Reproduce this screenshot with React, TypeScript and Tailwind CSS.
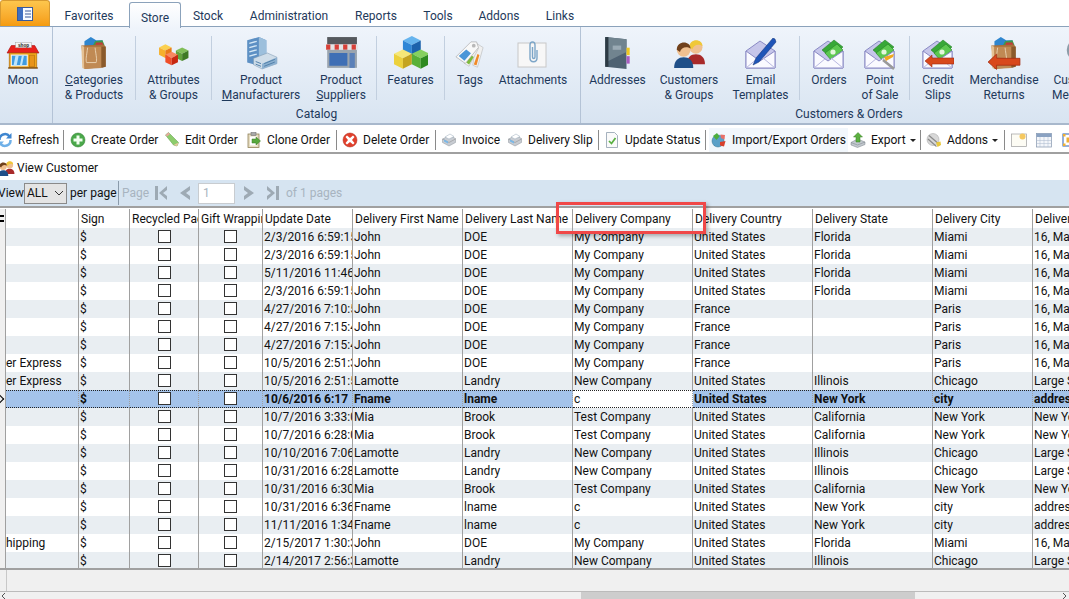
import type { ReactNode } from "react";

const I = ({ s = 32, children }: { s?: number; children: ReactNode }) => (
  <svg width={s} height={s} viewBox="0 0 32 32" className="shrink-0">
    {children}
  </svg>
);

// ribbon icons
const Shop = () => (
  <I s={34}>
    <path d="M5 9h22l4 7H1z" fill="#e8201c" stroke="#a81010" strokeWidth=".6" />
    <rect x="3" y="16" width="26" height="14" fill="#f3a81c" stroke="#a86a10" strokeWidth=".6" />
    <rect x="9" y="6" width="15" height="5" fill="#f4f4f4" stroke="#999" strokeWidth=".4" />
    <text x="16.5" y="10" fontSize="4.4" fontWeight="700" textAnchor="middle" fill="#222" fontFamily="Liberation Sans, sans-serif">shop</text>
    <rect x="5" y="18" width="15" height="10" fill="#3f9be0" stroke="#f6f6f6" />
    <path d="M9 18l-2 10h3l2-10zM15 18l-2 10h2l2-10z" fill="#bfe4fa" />
    <rect x="22" y="18" width="5" height="11" fill="#e8941a" stroke="#a86a10" strokeWidth=".5" />
    <rect x="2" y="29.5" width="28" height="1.2" fill="#7a4a10" />
  </I>
);
const Bag = () => (
  <g>
    <path d="M7 5l6-4 5 3 6 0 0 6H7z" fill="#2f86cf" />
    <path d="M17 5l7-1 2 5H15z" fill="#3f9a4a" />
    <path d="M18 6l6 0 1 3h-8z" fill="#c33a3a" />
    <path d="M4 9l21-1 2 2 0 19-20 2z" fill="#a8703c" />
    <path d="M4 9l3 1v21l-2-1z" fill="#e5c193" />
    <path d="M7 10h16l0 20-16 1z" fill="#c08a54" />
    <path d="M23 10l4 0v19l-4 1z" fill="#8a5a2c" />
    <path d="M10 11c-1 8-2 11-1 14h9c1-3 0-6-1-14" fill="none" stroke="#e9d1b0" strokeWidth=".9" />
  </g>
);
const Arrow = () => <path d="M17 21l-8-.2 0-3.8-8 7.5 8 7 0-4 22 0 0-6.500z" fill="#d8481c" stroke="#a02a10" strokeWidth=".7" />;
const Cube = ({ x, y, c, d, e }: { x: number; y: number; c: string; d: string; e: string }) => (
  <g transform={`translate(${x} ${y})`}>
    <path d="M0 3l6-3 6 3-6 3z" fill={d} />
    <path d="M0 3l6 3v7l-6-3z" fill={c} />
    <path d="M12 3l-6 3v7l6-3z" fill={e} />
  </g>
);
const Blocks = () => (
  <I>
    <g transform="scale(1.05)">
      <Cube x={1} y={6} c="#f6b02c" d="#fbd050" e="#e87a18" />
      <Cube x={17} y={9} c="#62a23c" d="#80be58" e="#3e7a24" />
      <Cube x={7} y={13} c="#f04e28" d="#f88860" e="#c82810" />
    </g>
  </I>
);
const Buildings = () => (
  <I s={34}>
    <path d="M3 4l11-3 7 3v21l-7 3-11-3z" fill="#5d90c4" />
    <path d="M14 1l7 3v21l-7 3z" fill="#9cbfdc" />
    <path d="M5 7l7-2M5 11l7-2M5 15l7-2M5 19l7-2" stroke="#d6e8f6" strokeWidth="1.2" />
    <path d="M9 21l13-5 9 4v6l-14 5-8-4z" fill="#cfdde9" stroke="#7c98b0" strokeWidth=".5" />
    <path d="M17 26l14-6v6l-14 5z" fill="#8cb0d0" />
    <path d="M11 24l5 2M11 26.500l5 2M19 26l10-4M19 28.500l10-4" stroke="#4f7ea8" strokeWidth=".9" />
  </I>
);
const Store = () => (
  <I s={34}>
    <rect x="3" y="1" width="28" height="7" fill="#55595e" />
    <path d="M2 8h30v5H2z" fill="#e4e4e4" />
    <path d="M2 8h4v5H2zM10 8h4v5h-4zM18 8h4v5h-4zM26 8h4v5h-4z" fill="#d84038" />
    <rect x="3" y="13" width="28" height="17" fill="#9aa4ae" />
    <rect x="5" y="16" width="17" height="12" fill="#3f6fb5" />
    <rect x="24" y="16" width="5" height="14" fill="#5a80b8" />
  </I>
);
const Features = () => (
  <I s={34}>
    <g transform="scale(1.4)">
      <Cube x={6} y={0} c="#2f86d6" d="#66b4ee" e="#1c62ac" />
      <Cube x={0} y={9} c="#ecd13c" d="#f6e878" e="#c4a420" />
      <Cube x={12} y={9} c="#58b038" d="#86d060" e="#2e8a20" />
    </g>
  </I>
);
const Tags = () => (
  <I s={30}>
    <path d="M22 3l8 5-6 21-5-2z" fill="#f0f0f0" stroke="#aaa" strokeWidth=".5" />
    <path d="M24 15l2 1-3 11-3-1z" fill="#f08a28" />
    <path d="M18 4l7 5-10 19-5-3z" fill="#f2f2f2" stroke="#aaa" strokeWidth=".5" />
    <path d="M17 16l3 2-5 8-3-2z" fill="#7dbb3c" />
    <path d="M17 2l6 0 2 6-14 17-10-7z" fill="#f8f8f8" stroke="#999" strokeWidth=".6" />
    <path d="M12 10l5 4-7 8-6-5z" fill="#4a96d8" />
    <circle cx="20" cy="6" r="2" fill="#b8b8b8" />
  </I>
);
const Attach = () => (
  <I>
    <rect x="1" y="5" width="28" height="24" fill="#f7f7f7" stroke="#c8c8c8" />
    <path d="M20 12v8c0 5-7 5-7 0V7c0-4 5-4 5 0v12c0 2-2.500 2-2.500 0V9" fill="none" stroke="#7da6c8" strokeWidth="1.4" />
  </I>
);
const Book = () => (
  <I s={34}>
    <path d="M4 1l20 2v28l-20 -2z" fill="#4f6272" />
    <path d="M4 1l20 2v12L4 25z" fill="#71848f" />
    <rect x="4" y="1" width="3" height="28" fill="#2d3a44" />
    <rect x="24" y="11" width="3" height="7" fill="#f0c820" />
    <rect x="24" y="19" width="3" height="7" fill="#a85cc0" />
    <rect x="11" y="9" width="8" height="4" fill="#9aaab4" />
  </I>
);
const Person = ({ x, y, hair, shirt, s = 1 }: { x: number; y: number; hair: string; shirt: string; s?: number }) => (
  <g transform={`translate(${x} ${y}) scale(${s})`}>
    <path d="M1 26c0-7 4-10 9-10s9 3 9 10z" fill={shirt} />
    <circle cx="10" cy="9" r="6.500" fill="#f0c090" />
    <path d="M3.500 9c0-9 13-9 13-1-4-3-9-1-10 3z" fill={hair} />
  </g>
);
const People = () => (
  <I s={34}>
    <Person x={13} y={2} hair="#f0c838" shirt="#a82a2a" s={0.95} />
    <Person x={1} y={4} hair="#70401c" shirt="#1f4f88" />
  </I>
);
const Env = ({ children }: { children?: ReactNode }) => (
  <g>
    <path d="M1 13L15 3l15 10v17H1z" fill="#c6c6ea" stroke="#8a8ac4" />
    {children}
    <path d="M1 13l14 10 15-10v17H1z" fill="#fafaff" stroke="#8a8ac4" />
    <path d="M1 30l12-10M30 30L18 20" stroke="#b8b8e0" />
  </g>
);
const Money = () => (
  <g>
    <path d="M9 12l12-10 9 7-12 11z" fill="#38a838" stroke="#1e7a1e" strokeWidth=".5" />
    <path d="M12 15l12-9 6 6-12 10z" fill="#5cc850" stroke="#1e7a1e" strokeWidth=".5" />
    <circle cx="20" cy="14" r="2.600" fill="#e4f6dc" />
  </g>
);
const Mail = () => (
  <I>
    <Env />
    <path d="M30 1l-2-1-17 20-3 7 6-3 17-20z" fill="#1f55b8" stroke="#0e2e70" strokeWidth=".5" />
  </I>
);
const Orders = () => (
  <I><Env><Money /></Env></I>
);
const Pos = () => (
  <I>
    <Env><Money /></Env>
    <path d="M19 22l11 9" stroke="#9a9a9a" strokeWidth="2.500" />
    <path d="M20 19l10-3-1 3-7 4z" fill="#f0a820" />
  </I>
);
const Credit = () => (
  <I>
    <Env><Money /></Env>
    <g transform="translate(3 1)"><path d="M12 19l-5 0 0-3-7 6 7 6 0-3 22 0 0-6z" fill="#d8481c" stroke="#a02a10" strokeWidth=".6" /></g>
  </I>
);
const Returns = () => (
  <I s={34}><Bag /><Arrow /></I>
);
const Magnify = () => (
  <I>
    <circle cx="14" cy="12" r="10" fill="#dce8f2" stroke="#8c9ca8" strokeWidth="2.500" />
    <path d="M20 20l8 9" stroke="#777" strokeWidth="3" />
  </I>
);

// toolbar icons
const Tb = ({ k }: { k: string }) => {
  const map: Record<string, ReactNode> = {
    refresh: (
      <g fill="none" strokeWidth="5">
        <path d="M5 16A11 11 0 0 1 25 9" stroke="#3f86d0" />
        <path d="M27 16A11 11 0 0 1 7 23" stroke="#6fb0e8" />
        <path d="M29 2v11H18z" fill="#3f86d0" stroke="none" />
        <path d="M3 30V19h11z" fill="#6fb0e8" stroke="none" />
      </g>
    ),
    create: (
      <g>
        <circle cx="16" cy="16" r="14" fill="#4aa84a" stroke="#2a7a2a" />
        <path d="M13 7h6v6h6v6h-6v6h-6v-6H7v-6h6z" fill="#f2fff0" />
      </g>
    ),
    edit: (
      <g>
        <path d="M3 6l6-5 20 20-3 7-7-2z" fill="#8ccc6c" stroke="#5a9a44" />
        <path d="M19 26l7 2 3-7z" fill="#e8c8a0" />
        <path d="M3 6l6-5 3 3-6 5z" fill="#e8a8a0" />
      </g>
    ),
    clone: (
      <g>
        <rect x="4" y="4" width="22" height="27" fill="#e6dcc0" stroke="#8a7c50" strokeWidth="1.500" />
        <rect x="10" y="1" width="10" height="6" fill="#a8a8a8" stroke="#666" />
        <rect x="8" y="9" width="14" height="18" fill="#fff" />
        <path d="M12 14h8v-4l9 8-9 8v-4h-8z" fill="#58a83c" stroke="#3a7a24" />
      </g>
    ),
    del: (
      <g>
        <circle cx="16" cy="16" r="14" fill="#e0402c" stroke="#b02818" />
        <path d="M10 7l6 5 6-5 3 3-5 6 5 6-3 3-6-5-6 5-3-3 5-6-5-6z" fill="#fff" />
      </g>
    ),
    print: (
      <g>
        <path d="M3 14l14-7 12 6v8L16 28 3 21z" fill="#c8ccd2" stroke="#8a929a" />
        <path d="M8 10l10-6 8 5-10 5z" fill="#fff" stroke="#9ab" />
        <path d="M3 14l13 7 13-7" fill="none" stroke="#888" />
        <path d="M6 15l8 4v4l-8-4z" fill="#7ab8e8" />
      </g>
    ),
    status: (
      <g>
        <path d="M5 1h16l6 6v24H5z" fill="#fafafa" stroke="#8a9aaa" strokeWidth="1.500" />
        <path d="M10 18l5 5 8-11" fill="none" stroke="#58b040" strokeWidth="3.500" />
      </g>
    ),
    imp: (
      <g>
        <circle cx="14" cy="18" r="12" fill="#5aa0c8" stroke="#2f708f" />
        <path d="M4 8l8-6 5 7-6 7z" fill="#4cae3c" />
        <path d="M18 20l11-2-3 11-8-2z" fill="#d8402c" />
        <path d="M19 5l9 1-1 9-7-3z" fill="#e87068" />
      </g>
    ),
    exp: (
      <g>
        <path d="M2 21l13-7 15 6v5l-15 6-13-5z" fill="#c2c8ce" stroke="#767e86" />
        <path d="M2 21l13 5 15-6" fill="none" stroke="#767e86" />
        <path d="M16 1l9 9h-5v10h-8V10H7z" fill="#5cb040" stroke="#3a8024" />
      </g>
    ),
    addon: (
      <g>
        <circle cx="14" cy="15" r="12" fill="#d8d8d8" stroke="#a0a0a0" />
        <path d="M6 7l22 19M4 14l17 15" stroke="#8a8a8a" strokeWidth="2.500" />
        <path d="M20 21l9-2 1 7-7 4z" fill="#e8c83c" />
      </g>
    ),
    img: (
      <g>
        <rect x="1" y="4" width="30" height="25" fill="#fdfcf4" stroke="#a4a4a4" strokeWidth="1.500" />
        <circle cx="23" cy="9" r="6" fill="#f5c860" />
      </g>
    ),
    cal: (
      <g>
        <rect x="1" y="3" width="30" height="27" fill="#f4f6fa" stroke="#8a9ab0" strokeWidth="1.500" />
        <rect x="1" y="3" width="30" height="7" fill="#8aa2c2" />
        <path d="M8 10v20M16 10v20M24 10v20M1 17h30M1 23h30" stroke="#aab8cc" />
      </g>
    ),
    sel: (
      <g>
        <rect x="4" y="4" width="24" height="24" fill="#fff" stroke="#2f5fb0" strokeWidth="2" />
        <rect x="11" y="11" width="10" height="10" fill="#f0b030" />
        <path d="M4 4h5v5H4zM23 4h5v5h-5zM4 23h5v5H4zM23 23h5v5h-5z" fill="#f0b030" />
      </g>
    ),
  };
  return <I s={16}>{map[k]}</I>;
};

const Item = ({ w, icon, l1, l2 }: { w: string; icon: ReactNode; l1: ReactNode; l2?: ReactNode }) => (
  <div className={`flex flex-col items-center pt-[9px] text-center leading-[15px] shrink-0 ${w}`}>
    <div className="h-[34px] flex items-end justify-center">{icon}</div>
    <div className="mt-[3px] whitespace-nowrap">{l1}</div>
    {l2 && <div className="whitespace-nowrap">{l2}</div>}
  </div>
);

const Sep = () => <div className="w-px h-[64px] mt-[9px] bg-[#c2cfdf] shrink-0" />;

const tabs = [
  { t: "Favorites", w: "w-[80px]" },
  { t: "Store", w: "w-[52px]" },
  { t: "Stock", w: "w-[54px]" },
  { t: "Administration", w: "w-[108px]" },
  { t: "Reports", w: "w-[66px]" },
  { t: "Tools", w: "w-[58px]" },
  { t: "Addons", w: "w-[64px]" },
  { t: "Links", w: "w-[58px]" },
];

const tools = [
  { k: "refresh", t: "Refresh", w: "w-[64px]", cls: "-ml-[5px]", sep: true },
  { k: "create", t: "Create Order", w: "w-[95px]", cls: "pl-[3px]" },
  { k: "edit", t: "Edit Order", w: "w-[82px]" },
  { k: "clone", t: "Clone Order", w: "w-[88px]", sep: true },
  { k: "del", t: "Delete Order", w: "w-[91px]", sep: true },
  { k: "print", t: "Invoice", w: "w-[66px]" },
  { k: "print", t: "Delivery Slip", w: "w-[89px]", sep: true },
  { k: "status", t: "Update Status", w: "w-[99px]", sep: true },
  { k: "imp", t: "Import/Export Orders", w: "w-[139px]", cls: "bg-[#f2f7fc]" },
  { k: "exp", t: "Export", w: "w-[68px]", caret: true, sep: true },
  { k: "addon", t: "Addons", w: "w-[76px]", caret: true, sep: true },
];

const Caret = () => <span className="ml-[-1px] w-0 h-0 border-x-[3px] border-x-transparent border-t-[3px] border-t-[#222]" />;

const cols = [
  "w-[6px] bg-[#f0f0f0]",
  "w-[73px]",
  "w-[51px]",
  "w-[69px]",
  "w-[64px]",
  "w-[90px]",
  "w-[110px]",
  "w-[110px]",
  "w-[120px]",
  "w-[120px]",
  "w-[120px]",
  "w-[100px]",
  "w-[60px]",
];

const heads = ["", "", "Sign", "Recycled Pac", "Gift Wrappin", "Update Date", "Delivery First Name", "Delivery Last Name", "Delivery Company", "Delivery Country", "Delivery State", "Delivery City", "Delivery"];

const john = ["John", "DOE", "My Company"];
const lam = ["Lamotte", "Landry", "New Company"];
const mia = ["Mia", "Brook", "Test Company"];
const fn = ["Fname", "lname", "c"];
const fl = ["United States", "Florida", "Miami", "16, Main Street"];
const fr = ["France", "", "Paris", "16, Main Street"];
const il = ["United States", "Illinois", "Chicago", "Large Street"];
const ca = ["United States", "California", "New York", "New York Ave"];
const ny = ["United States", "New York", "city", "address"];

const rows: { d: string; c0?: string; a: string[]; b: string[] }[] = [
  { d: "2/3/2016 6:59:15", a: john, b: fl },
  { d: "2/3/2016 6:59:15", a: john, b: fl },
  { d: "5/11/2016 11:46:", a: john, b: fl },
  { d: "2/3/2016 6:59:15", a: john, b: fl },
  { d: "4/27/2016 7:10:5", a: john, b: fr },
  { d: "4/27/2016 7:15:4", a: john, b: fr },
  { d: "4/27/2016 7:15:4", a: john, b: fr },
  { d: "10/5/2016 2:51:3", c0: "er Express", a: john, b: fr },
  { d: "10/5/2016 2:51:5", c0: "er Express", a: lam, b: il },
  { d: "10/6/2016 6:17", a: fn, b: ny },
  { d: "10/7/2016 3:33:0", a: mia, b: ca },
  { d: "10/7/2016 6:28:0", a: mia, b: ca },
  { d: "10/10/2016 7:06:", a: lam, b: il },
  { d: "10/31/2016 6:28:", a: lam, b: il },
  { d: "10/31/2016 6:30:", a: mia, b: ca },
  { d: "10/31/2016 6:36:", a: fn, b: ny },
  { d: "11/11/2016 1:34:", a: fn, b: ny },
  { d: "2/15/2017 1:30:3", c0: "hipping", a: john, b: fl },
  { d: "2/14/2017 2:56:3", a: lam, b: il },
];

const Check = () => <span className="block w-[13px] h-[13px] -mt-[1px] bg-white border border-[#333]" />;

const Row = ({ r, i }: { r: (typeof rows)[number]; i: number }) => {
  const sel = i === 9;
  const values = [r.c0 ?? "", "$", null, null, r.d, ...r.a, ...r.b];
  const bg = sel ? "bg-[#a4c3ea]" : i % 2 === 0 ? "bg-[#e9eef2]" : "bg-white";
  return (
    <div className={`flex h-[18px] shrink-0 ${bg} ${sel ? "font-bold" : ""}`}>
      <div className={`${cols[0]} shrink-0 border-r border-[#a0a0a0] relative`}>
        {sel && <span className="absolute left-[-3px] top-[6px] w-[6px] h-[6px] rotate-45 border-t border-r border-black" />}
      </div>
      {values.map((v, j) => {
        const editing = sel && j === 7;
        const pad = v === null ? "justify-center" : j === 0 ? "" : "pl-[1px]";
        return (
          <div
            key={j}
            className={`${cols[j + 1]} ${pad} shrink-0 overflow-hidden whitespace-nowrap border-r border-[#a0a0a0] flex items-center ${sel ? "border-y border-dotted border-y-[#222]" : ""} ${editing ? "bg-white font-normal" : ""}`}
          >
            {v === null ? <Check /> : v}
          </div>
        );
      })}
    </div>
  );
};

export default function App() {
  return (
    <div className="relative w-[1069px] h-[599px] overflow-hidden bg-white text-[12px] font-['Roboto','Noto_Sans',sans-serif] text-[#111]">
      {/* Tab strip */}
      <div className="flex h-[27px] border-b border-[#8ba2bb] text-[#1e395b]">
        <div className="w-[50px] h-[26px] rounded-t-[3px] border border-b-0 border-[#d89a30] bg-gradient-to-b from-[#fdc64c] to-[#f59b0c] flex items-center justify-center">
          <svg width="16" height="14" viewBox="0 0 16 14">
            <rect x=".5" y=".5" width="15" height="13" fill="#f8fbff" stroke="#3a5a9a" />
            <rect x="1" y="1" width="5" height="12" fill="#3f6fc0" />
            <path d="M8 4h6M8 7h6M8 10h6" stroke="#3a5a9a" />
          </svg>
        </div>
        <div className="flex -ml-px">
          {tabs.map((t) => (
            <div
              key={t.t}
              className={`${t.w} flex items-center justify-center pt-[5px] ${t.t === "Store" ? "h-[25px] mt-[2px] border border-b-0 border-[#8ba2bb] rounded-t-[3px] bg-gradient-to-b from-white to-[#eff4fb] pt-[3px] !h-[26px]" : ""}`}
            >
              {t.t}
            </div>
          ))}
        </div>
      </div>

      {/* Ribbon */}
      <div className="flex h-[98px] overflow-hidden bg-gradient-to-b from-[#eff4fb] to-[#d8e4f1] border-b-2 border-[#a8b8cc] text-[#1e395b]">
        <div className="w-[53px] shrink-0 border-r border-[#b4c3d6]">
          <Item w="w-[46px]" icon={<Shop />} l1="Moon" />
        </div>
        <div className="w-[528px] shrink-0 flex flex-col border-r border-[#b4c3d6]">
          <div className="flex h-[82px]">
            <Item w="w-[82px]" icon={<I s={34}><Bag /></I>} l1={<><u>C</u>ategories</>} l2="& Products" />
            <Sep />
            <Item w="w-[75px]" icon={<Blocks />} l1="Attributes" l2="& Groups" />
            <Sep />
            <Item w="w-[98px]" icon={<Buildings />} l1="Product" l2={<><u>M</u>anufacturers</>} />
            <Item w="w-[62px]" icon={<Store />} l1="Product" l2={<><u>S</u>uppliers</>} />
            <div className="w-[4px]" />
            <Sep />
            <Item w="w-[67px]" icon={<Features />} l1="Features" />
            <Sep />
            <Item w="w-[50px]" icon={<Tags />} l1="Tags" />
            <Item w="w-[76px]" icon={<Attach />} l1="Attachments" />
          </div>
          <div className="text-center leading-[15px] mt-[-2px]">Catalog</div>
        </div>
        <div className="w-[536px] shrink-0 flex flex-col">
          <div className="flex h-[82px]">
            <Item w="w-[73px]" icon={<Book />} l1="Addresses" />
            <Item w="w-[70px]" icon={<People />} l1="Customers" l2="& Groups" />
            <Item w="w-[73px]" icon={<Mail />} l1="Email" l2="Templates" />
            <div className="w-[2px]" />
            <Sep />
            <Item w="w-[58px]" icon={<Orders />} l1="Orders" />
            <Item w="w-[44px]" icon={<Pos />} l1="Point" l2="of Sale" />
            <div className="w-[7px]" />
            <Sep />
            <Item w="w-[56px]" icon={<Credit />} l1="Credit" l2="Slips" />
            <Item w="w-[76px]" icon={<Returns />} l1="Merchandise" l2="Returns" />
            <Item w="w-[75px]" icon={<Magnify />} l1="Customer" l2="Messages" />
          </div>
          <div className="w-[536px] text-center leading-[15px] mt-[-2px]">Customers &amp; Orders</div>
        </div>
      </div>

      {/* Toolbar */}
      <div className="mt-[2px] flex items-center h-[27px] border-b-2 border-[#a0a0a0] overflow-hidden pt-[1px]">
        {tools.map((b) => (
          <div key={b.t + b.k} className="flex items-center shrink-0">
            <div className={`${b.w} ${b.cls ?? ""} h-[24px] flex items-center gap-[5px] pl-[2px] whitespace-nowrap`}>
              <Tb k={b.k} />
              <span>{b.t}</span>
              {b.caret && <Caret />}
            </div>
            {b.sep && <div className="w-px h-[20px] bg-[#8a8a8a] ml-[4px] mr-[3px]" />}
          </div>
        ))}
        <div className="flex gap-[9px] ml-[3px]">
          <Tb k="img" />
          <Tb k="cal" />
          <Tb k="sel" />
        </div>
      </div>

      {/* View customer */}
      <div className="h-[26px] flex items-center gap-[2px] -ml-[3px] pt-[2px]">
        <I s={18}>
          <Person x={13} y={2} hair="#f0c838" shirt="#a82a2a" s={0.95} />
          <Person x={1} y={4} hair="#70401c" shirt="#1f4f88" />
        </I>
        <span>View Customer</span>
      </div>

      {/* Pager */}
      <div className="h-[28px] bg-[#d6e4f1] flex items-center border-b-2 border-[#a0a0a0] whitespace-nowrap">
        <span className="w-[24px] -ml-[2px] shrink-0">View</span>
        <div className="w-[43px] ml-[2px] h-[21px] bg-[#e4e4e4] border border-[#8a8a8a] flex items-center justify-between px-[2px] shrink-0">
          ALL
          <svg width="10" height="6" viewBox="0 0 10 6"><path d="M1 1l4 4 4-4" fill="none" stroke="#333" /></svg>
        </div>
        <span className="ml-[3px] w-[46px] shrink-0">per page</span>
        <div className="w-px h-[24px] bg-[#8a9aaa] ml-[2px]" />
        <span className="ml-[3px] text-[#a8b4c0] w-[32px]">Page</span>
        <svg width="14" height="14" viewBox="0 0 14 14" className="shrink-0"><path d="M1 0h3v14H1zM13 0v4L9 7l4 3v4L5 7z" fill="#9eaab4" /></svg>
        <svg width="12" height="14" viewBox="0 0 12 14" className="ml-[11px] shrink-0"><path d="M11 0v4L7 7l4 3v4L1 7z" fill="#9eaab4" /></svg>
        <div className="w-[37px] h-[21px] ml-[7px] bg-white border border-[#c8ccd0] text-[#a8b4c0] pl-[4px] flex items-center shrink-0">1</div>
        <svg width="12" height="14" viewBox="0 0 12 14" className="ml-[8px] shrink-0"><path d="M1 0v4l4 3-4 3v4l10-7z" fill="#9eaab4" /></svg>
        <svg width="14" height="14" viewBox="0 0 14 14" className="ml-[11px] shrink-0"><path d="M1 0v4l4 3-4 3v4l8-7zM10 0h3v14h-3z" fill="#9eaab4" /></svg>
        <span className="ml-[6px] text-[#a8b4c0]">of 1 pages</span>
      </div>

      {/* Grid */}
      <div className="flex flex-col">
        <div className="flex h-[20px] shrink-0 pt-[1px]">
          {heads.map((h, i) => (
            <div key={i} className={`${cols[i]} shrink-0 overflow-hidden whitespace-nowrap border-r border-[#a0a0a0] pl-[2px] flex items-center`}>
              {i === 0 ? <span className="block w-[4px] -ml-[2px] h-[7px] border-y-2 border-black" /> : h}
            </div>
          ))}
        </div>
        {rows.map((r, i) => (
          <Row key={i} r={r} i={i} />
        ))}
      </div>

      {/* Grid footer */}
      <div className="relative h-[24px] bg-[#f0f0f0] border-t-2 border-[#a0a0a0] border-b border-b-[#bbbbbb] mt-[-2px]">
        <div className="w-[7px] h-full border-r border-[#c8c8c8]" />
      </div>
      <div className="h-[7px] bg-[#f0f0f0] flex justify-between items-center overflow-hidden">
        <svg width="5" height="7" viewBox="0 0 5 7" className="ml-[1px] shrink-0"><path d="M4 1L1 4l3 3" fill="none" stroke="#555" /></svg>
        <div className="w-[334px] h-full bg-[#cdcdcd] ml-[575px]" />
        <svg width="5" height="7" viewBox="0 0 5 7" className="ml-auto mr-[2px] shrink-0"><path d="M1 1l3 3-3 3" fill="none" stroke="#555" /></svg>
      </div>

      {/* Red annotation around the Delivery Company header */}
      <div className="absolute left-[556px] top-[202px] w-[150px] h-[32px] border-[3px] border-[#f04848] shadow-[2px_2px_4px_rgba(0,0,0,0.3)]" />
    </div>
  );
}
